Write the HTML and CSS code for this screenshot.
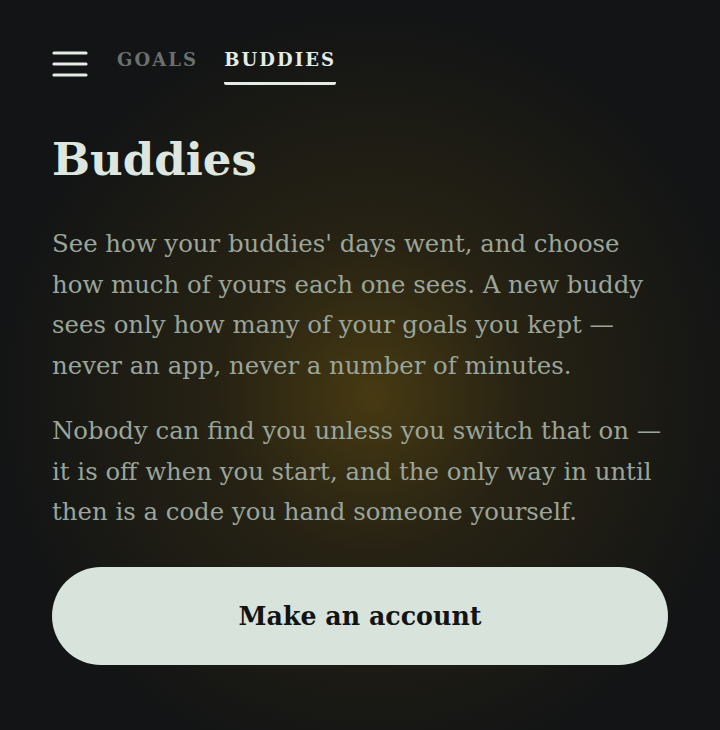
FILE: index.html
```html
<!DOCTYPE html>
<html lang="en">
<head>
<meta charset="utf-8">
<title>Buddies</title>
<link rel="stylesheet" href="styles.css">
</head>
<body>
<div class="page">
  <nav class="nav">
    <button class="menu" aria-label="Menu">
      <svg width="36" height="26" viewBox="0 0 36 26"><g stroke="#e4ece6" stroke-width="3.2" stroke-linecap="round"><line x1="2" y1="2" x2="34" y2="2"/><line x1="2" y1="13" x2="34" y2="13"/><line x1="2" y1="24" x2="34" y2="24"/></g></svg>
    </button>
    <a class="tab">GOALS</a>
    <a class="tab active">BUDDIES</a>
  </nav>
  <main class="content">
    <h1 class="title">Buddies</h1>
    <p class="text">See how your buddies' days went, and choose how much of yours each one sees. A new buddy sees only how many of your goals you kept — never an app, never a number of minutes.</p>
    <p class="text">Nobody can find you unless you switch that on — it is off when you start, and the only way in until then is a code you hand someone yourself.</p>
    <button class="cta">Make an account</button>
  </main>
</div>
</body>
</html>
```
FILE: styles.css
```css
html, body {
  margin: 0;
  padding: 0;
  height: 100%;
}
body {
  background-color: #121415;
  background-image: radial-gradient(ellipse 380px 390px at 372px 395px, rgba(74, 60, 18, 0.95) 0%, rgba(52, 43, 18, 0.6) 40%, rgba(18, 20, 21, 0) 100%);
  font-family: "DejaVu Serif", serif;
  color: #9aa59b;
  min-height: 730px;
}
.page {
  padding: 0 52px;
}
.nav {
  display: flex;
  align-items: flex-start;
  padding-top: 50px;
}
.menu {
  background: none;
  border: 0;
  padding: 0;
  margin: 1px 29px 0 0;
  width: 36px;
  height: 26px;
  cursor: pointer;
}
.menu svg { display: block; }
.tab {
  font-size: 18px;
  font-weight: bold;
  letter-spacing: 2.1px;
  color: #6b716e;
  padding-bottom: 12px;
  margin-right: 26px;
  line-height: 20px;
  border-bottom: 3px solid transparent;
  border-radius: 2px;
}
.tab.active {
  color: #e4ece6;
  border-bottom-color: #e4ece6;
}
.content {
  padding-top: 45px;
}
.title {
  font-size: 45px;
  font-weight: bold;
  color: #dde7df;
  margin: 0 0 34px;
  line-height: 60px;
}
.text {
  font-size: 24.4px;
  line-height: 40.5px;
  margin: 0 0 25px;
}
.cta {
  display: block;
  width: 100%;
  height: 98px;
  margin-top: 34px;
  border: 0;
  border-radius: 49px;
  background: #d8e4db;
  color: #121414;
  font-family: "DejaVu Serif", serif;
  font-size: 25.3px;
  font-weight: bold;
}
```
